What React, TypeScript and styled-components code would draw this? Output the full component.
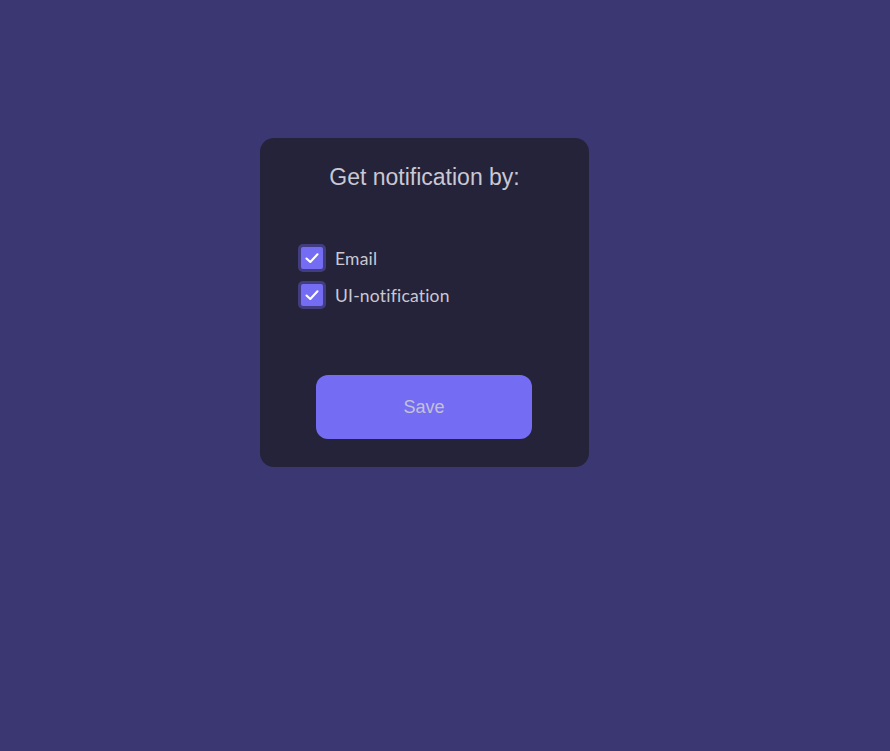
import styled, { createGlobalStyle } from "styled-components";

const GlobalStyle = createGlobalStyle`
  html, body {
    margin: 0;
    padding: 0;
    background: #3b3772;
  }
`;

const Page = styled.div`
  min-height: 100vh;
  background: #3b3772;
  padding: 138px 0 0 260px;
  box-sizing: border-box;
`;

const Card = styled.div`
  width: 329px;
  height: 329px;
  box-sizing: border-box;
  padding: 25px 0 28px 38px;
  background: #25233a;
  border-radius: 14px;
  display: flex;
  flex-direction: column;
`;

const Title = styled.h2`
  margin: 0 38px 0 0;
  font-family: "Liberation Sans", Arial, sans-serif;
  font-weight: 400;
  font-size: 23px;
  line-height: 28px;
  color: #c9c8d3;
  text-align: center;
`;

const Options = styled.div`
  display: flex;
  flex-direction: column;
  gap: 9px;
  margin-top: 53px;
`;

const Option = styled.label`
  display: flex;
  align-items: center;
  gap: 9px;
  font-family: Lato, "Noto Sans", sans-serif;
  font-size: 17.5px;
  letter-spacing: 0.2px;
  font-variant-ligatures: none;
  color: #c9c8d3;
`;

const Box = styled.span`
  width: 28px;
  height: 28px;
  box-sizing: border-box;
  border: 3px solid #413d80;
  border-radius: 5px;
  background: #756cf4;
  display: flex;
  align-items: center;
  justify-content: center;
`;

const SaveButton = styled.button`
  align-self: center;
  margin: auto 39px 0 0;
  width: 216px;
  height: 64px;
  border: none;
  border-radius: 12px;
  background: #756cf4;
  color: #c3c1d6;
  font-family: "Liberation Sans", Arial, sans-serif;
  font-size: 18px;
`;

function Check() {
  return (
    <svg width="16" height="16" viewBox="0 0 16 16">
      <path d="M2.5 8.5 L6.3 12 L13.5 4.3" fill="none" stroke="#fff" strokeWidth="2.1" strokeLinecap="round" strokeLinejoin="round" />
    </svg>
  );
}

const options = ["Email", "UI-notification"];

export default function App() {
  return (
    <>
      <GlobalStyle />
      <Page>
        <Card>
          <Title>Get notification by:</Title>
          <Options>
            {options.map((o) => (
              <Option key={o}>
                <Box>
                  <Check />
                </Box>
                {o}
              </Option>
            ))}
          </Options>
          <SaveButton>Save</SaveButton>
        </Card>
      </Page>
    </>
  );
}
